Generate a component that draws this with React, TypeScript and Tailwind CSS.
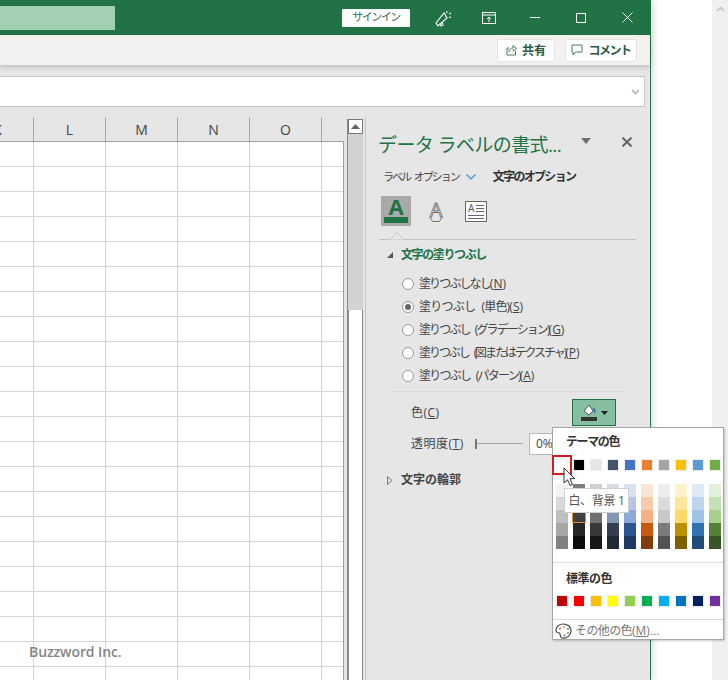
import React from "react";

const theme = [
  { top: "#ffffff", shades: ["#f2f2f2", "#d9d9d9", "#bfbfbf", "#a6a6a6", "#808080"] },
  { top: "#000000", shades: ["#7f7f7f", "#595959", "#404040", "#262626", "#0d0d0d"] },
  { top: "#e7e6e6", shades: ["#d0cece", "#afabab", "#757070", "#3a3838", "#171616"] },
  { top: "#44546a", shades: ["#d6dce4", "#acb9ca", "#8497b0", "#333f4f", "#222b35"] },
  { top: "#4472c4", shades: ["#d9e2f3", "#b4c6e7", "#8eaadb", "#2f5496", "#1f3864"] },
  { top: "#ed7d31", shades: ["#fbe5d5", "#f7cbac", "#f4b183", "#c55a11", "#833c0b"] },
  { top: "#a5a5a5", shades: ["#ededed", "#dbdbdb", "#c9c9c9", "#7b7b7b", "#525252"] },
  { top: "#ffc000", shades: ["#fff2cc", "#fee599", "#ffd965", "#bf9000", "#7f6000"] },
  { top: "#5b9bd5", shades: ["#deeaf6", "#bdd6ee", "#9cc2e5", "#2e74b5", "#1f4e79"] },
  { top: "#70ad47", shades: ["#e2efd9", "#c5e0b3", "#a8d08d", "#538135", "#375623"] },
];

const standard = ["#c00000", "#ff0000", "#ffc000", "#ffff00", "#92d050", "#00b050", "#00b0f0", "#0070c0", "#002060", "#7030a0"];

const fills = [
  { label: "塗りつぶしなし", key: "N", track: "tracking-[-1.9px]" },
  { label: "塗りつぶし (単色)", key: "S", track: "tracking-[-0.8px] [word-spacing:4px]", checked: true },
  { label: "塗りつぶし (グラデーション)", key: "G", track: "tracking-[-1.9px] [word-spacing:4px]" },
  { label: "塗りつぶし (図またはテクスチャ)", key: "P", track: "tracking-[-2.1px] [word-spacing:4px]" },
  { label: "塗りつぶし (パターン)", key: "A", track: "tracking-[-1.75px] [word-spacing:4px]" },
];

function TitleBar() {
  return (
    <div className="flex h-[35px] shrink-0 items-center bg-[#217346] text-white">
      <div className="h-[24px] w-[115px] bg-[#a3d0b3]" />
      <div className="ml-[227px] flex h-[18px] w-[68px] items-center justify-center rounded-[1px] bg-white text-[11px] tracking-[-1.5px] text-[#3b6a52]">
        サインイン
      </div>
      <svg className="ml-[24px]" width="18" height="20" viewBox="0 0 18 20" fill="none" stroke="white" strokeWidth="1.1">
        <path d="M2 15 L10 5 L13 10 L4 18 Z" />
        <path d="M6 15 L7 18 L9 17 L8 14" />
        <path d="M13 3 L12.5 5 M15 6 L17 5 M15 9 L17 9.5" />
      </svg>
      <svg className="ml-[30px]" width="14" height="12" viewBox="0 0 14 12" fill="none" stroke="white" strokeWidth="1">
        <rect x="0.5" y="0.5" width="13" height="11" />
        <path d="M0.5 3 H13.5" />
        <path d="M7 10 V5 M5 7 L7 5 L9 7" />
      </svg>
      <div className="ml-[34px] h-px w-[10px] bg-white" />
      <div className="ml-[36px] h-[10px] w-[10px] border border-white" />
      <svg className="ml-[36px]" width="11" height="11" viewBox="0 0 11 11" stroke="white" strokeWidth="1">
        <path d="M0.5 0.5 L10.5 10.5 M10.5 0.5 L0.5 10.5" />
      </svg>
    </div>
  );
}

function RibbonBar() {
  return (
    <div className="z-10 flex h-[30px] shrink-0 items-center justify-end gap-[10px] bg-[#f3f2f1] pr-[13px] shadow-[0_2px_5px_rgba(0,0,0,0.18)]">
      <div className="flex h-[23px] w-[58px] items-center justify-center gap-[5px] rounded-[2px] border border-[#e6e4e2] bg-white text-[12px] font-bold text-[#2a5c43]">
        <svg width="11" height="12" viewBox="0 0 11 12" fill="none" stroke="#4a7a62" strokeWidth="1">
          <path d="M3 4 H1 V11 H9.5 V7" />
          <path d="M3 8 C3 5 5 4 7 4 V1.5 L10.5 4.5 L7 7 V5.5" />
        </svg>
        <span className="pt-[2px]">共有</span>
      </div>
      <div className="flex h-[23px] w-[72px] items-center justify-center gap-[5px] rounded-[2px] border border-[#e6e4e2] bg-white text-[12px] font-bold tracking-[-1.5px] text-[#2a5c43]">
        <svg width="12" height="12" viewBox="0 0 12 12" fill="none" stroke="#4a7a62" strokeWidth="1">
          <path d="M1 1 H11 V8 H4.5 L2 11 V8 H1 Z" />
        </svg>
        <span className="pt-[2px]">コメント</span>
      </div>
    </div>
  );
}

function FormulaBar() {
  return (
    <div className="shrink-0 pt-[11px] pr-[5px]">
      <div className="flex h-[31px] items-center justify-end border border-l-0 border-[#c6c6c6] bg-white pr-[4px]">
        <svg width="9" height="6" viewBox="0 0 9 6" fill="none" stroke="#b5b5b5" strokeWidth="1.6">
          <path d="M1 1 L4.5 4.5 L8 1" />
        </svg>
      </div>
    </div>
  );
}

function Sheet() {
  const columns = ["K", "L", "M", "N", "O"];
  const rows = Array.from({ length: 22 }, (_, i) => i);
  return (
    <div className="w-[344px] shrink-0 overflow-hidden">
      <div className="ml-[-38px] flex h-[24px] text-[14px] text-[#444]">
        {columns.map((c) => (
          <div key={c} className="flex w-[72px] shrink-0 items-center justify-center border-r border-[#a8a8a8]">
            {c}
          </div>
        ))}
      </div>
      <div className="h-full border-t border-r border-[#9f9f9f] bg-white">
        {rows.map((r) => (
          <div key={r} className="ml-[-38px] flex h-[25px] border-b border-[#d4d4d4]">
            {columns.map((c) => (
              <div key={c} className="w-[72px] shrink-0 border-r border-[#d4d4d4]" />
            ))}
          </div>
        ))}
      </div>
    </div>
  );
}

function ScrollBar() {
  return (
    <div className="ml-[3px] mt-[2px] flex w-[16px] shrink-0 flex-col border-l border-[#8a8a8a]">
      <div className="flex h-[15px] w-[15px] items-center justify-center border border-[#777] bg-white">
        <svg width="9" height="5" viewBox="0 0 9 5">
          <path d="M0 5 L4.5 0 L9 5 Z" fill="#666" />
        </svg>
      </div>
      <div className="h-[176px] bg-[#d2d2d2]" />
      <div className="flex-1 border-x border-[#8a8a8a] bg-white" />
    </div>
  );
}

function PanelIcons() {
  return (
    <div className="mt-[9px] flex items-center pl-[15px]">
      <div className="flex h-[30px] w-[30px] flex-col items-center justify-end bg-[#a9a9a9] pb-[3px]">
        <span className="text-[22px] font-bold leading-[20px] text-[#217346]">A</span>
        <div className="mt-[1px] h-[6px] w-[24px] bg-[#217346]" />
      </div>
      <svg className="ml-[16px]" width="18" height="30" viewBox="0 0 18 30">
        <path d="M3 21 L5.5 25.5 H12.5 L15 21" fill="none" stroke="#777" strokeWidth="1" />
        <text x="9" y="21" fontSize="20" textAnchor="middle" fill="#f7f7f7" stroke="#6e6e6e" strokeWidth="0.8">A</text>
      </svg>
      <div className="ml-[20px] flex h-[21px] w-[22px] flex-col border border-[#666] bg-white px-[2px] pt-[1px]">
        <div className="flex items-start justify-between">
          <span className="text-[10px] leading-[11px] text-[#555]">A</span>
          <div className="mt-[2px] flex flex-col gap-[2px]">
            <div className="h-px w-[8px] bg-[#666]" />
            <div className="h-px w-[8px] bg-[#666]" />
            <div className="h-px w-[8px] bg-[#666]" />
          </div>
        </div>
        <div className="mt-[1px] h-px bg-[#666]" />
        <div className="mt-[2px] h-px bg-[#666]" />
      </div>
    </div>
  );
}

function Panel() {
  return (
    <div className="mt-[10px] min-w-0 flex-1 border-l border-[#c4c4c4] pt-[14px] text-[#444]">
      <div className="flex h-[28px] items-center pl-[12px]">
        <span className="w-[203px] whitespace-nowrap text-[19px] tracking-[-0.6px] text-[#217346]">データ ラベルの書式...</span>
        <svg className="mb-[8px]" width="10" height="6" viewBox="0 0 10 6">
          <path d="M0 0 H10 L5 6 Z" fill="#6e6e6e" />
        </svg>
        <svg className="ml-[31px] mb-[7px]" width="10" height="10" viewBox="0 0 10 10" stroke="#666" strokeWidth="2">
          <path d="M0.5 0.5 L9.5 9.5 M9.5 0.5 L0.5 9.5" />
        </svg>
      </div>
      <div className="mt-[8px] flex h-[20px] items-center pl-[17px] text-[12px]">
        <span className="whitespace-nowrap text-[11px] tracking-[-2px] text-[#444] [word-spacing:3px]">ラベル オプション</span>
        <svg className="ml-[7px]" width="10" height="6" viewBox="0 0 10 6" fill="none" stroke="#3f8fd2" strokeWidth="1.2">
          <path d="M0.5 0.5 L5 5 L9.5 0.5" />
        </svg>
        <span className="ml-[17px] whitespace-nowrap font-bold tracking-[-1.7px] text-[#333]">文字のオプション</span>
      </div>
      <PanelIcons />
      <div className="relative mt-[13px] ml-[13px] mr-[14px] h-px bg-[#c4c4c4]">
        <svg className="absolute left-[11px] top-[-7px]" width="14" height="8" viewBox="0 0 14 8">
          <path d="M0 7.5 L7 0.5 L14 7.5" fill="#e6e6e6" stroke="#c4c4c4" />
        </svg>
      </div>
      <div className="mt-[6px] flex h-[18px] items-center pl-[21px] text-[12px] font-bold tracking-[-1.4px] text-[#217346]">
        <svg width="6" height="6" viewBox="0 0 6 6">
          <path d="M6 0 V6 H0 Z" fill="#555" />
        </svg>
        <span className="ml-[8px]">文字の塗りつぶし</span>
      </div>
      <div className="mt-[8px] flex flex-col pl-[36px] text-[12px]">
        {fills.map((f) => (
          <div key={f.key} className="flex h-[23px] items-center">
            <span className="flex h-[12px] w-[12px] items-center justify-center rounded-full border border-[#9a9a9a] bg-white">
              {f.checked && <span className="h-[6px] w-[6px] rounded-full bg-[#666]" />}
            </span>
            <span className="ml-[5px] whitespace-nowrap">
              <span className={f.track}>{f.label}</span>(<u>{f.key}</u>)
            </span>
          </div>
        ))}
      </div>
      <div className="ml-[25px] mr-[24px] mt-[4px] h-px bg-[#dcdcdc]" />
      <div className="mt-[7px] flex h-[27px] items-center pl-[45px] text-[12px]">
        <span className="w-[161px] tracking-[0.5px]">
          色(<u>C</u>)
        </span>
        <div className="flex h-[27px] w-[44px] items-center justify-center gap-[4px] border border-[#217346] bg-[#86bfa0]">
          <svg width="16" height="19" viewBox="0 0 16 19">
            <path d="M3 8 L8 2 L12 8 L8 12 Z" fill="#fff" stroke="#333" strokeWidth="0.8" />
            <path d="M12 5 C14 6 14 8 13.5 10" fill="none" stroke="#1f6fb5" strokeWidth="1.4" />
            <rect x="0" y="14" width="16" height="4" fill="#333" />
          </svg>
          <svg width="7" height="4" viewBox="0 0 7 4">
            <path d="M0 0 H7 L3.5 4 Z" fill="#222" />
          </svg>
        </div>
      </div>
      <div className="mt-[6px] flex h-[23px] items-center pl-[45px] text-[12px]">
        <span className="w-[64px] whitespace-nowrap tracking-[0.5px]">
          透明度(<u>T</u>)
        </span>
        <div className="flex h-[10px] w-[48px] items-center">
          <div className="h-[10px] w-[2px] bg-[#777]" />
          <div className="h-px flex-1 bg-[#a5a5a5]" />
        </div>
        <div className="ml-[6px] flex h-[22px] w-[40px] items-center border border-[#b8b8b8] bg-white pl-[6px]">0%</div>
      </div>
      <div className="mt-[16px] flex h-[18px] items-center pl-[21px] text-[12px] font-bold">
        <svg width="6" height="9" viewBox="0 0 6 9" fill="none" stroke="#777">
          <path d="M0.5 0.5 L5 4.5 L0.5 8.5 Z" />
        </svg>
        <span className="ml-[8px]">文字の輪郭</span>
      </div>
    </div>
  );
}

function ColorMenu() {
  return (
    <div className="absolute left-[552px] top-[427px] h-[213px] w-[172px] border border-[#a6a6a6] bg-white shadow-[1px_1px_2px_rgba(0,0,0,0.2)]">
      <div className="flex h-[28px] items-center pl-[13px] text-[12px] font-bold tracking-[-1.4px] text-[#333]">テーマの色</div>
      <div className="mt-[3px] flex gap-[5px] pl-[3px]">
        {theme.map((c) => (
          <div key={c.top} className="h-[12px] w-[12px] border border-[#eeeeee]" style={{ background: c.top }} />
        ))}
      </div>
      <div className="mt-[13px] flex gap-[5px] pl-[3px]">
        {theme.map((c) => (
          <div key={c.top} className="flex w-[12px] flex-col">
            {c.shades.map((s) => (
              <div key={s} className="h-[13px] w-[12px]" style={{ background: s }} />
            ))}
          </div>
        ))}
      </div>
      <div className="mt-[13px] h-px bg-[#dddddd]" />
      <div className="flex h-[32px] items-center pl-[13px] text-[12px] font-bold tracking-[-0.5px] text-[#333]">標準の色</div>
      <div className="flex gap-[5px] pl-[3px]">
        {standard.map((c) => (
          <div key={c} className="h-[12px] w-[12px] border border-[#eeeeee]" style={{ background: c }} />
        ))}
      </div>
      <div className="mt-[12px] h-px bg-[#dddddd]" />
      <div className="flex h-[21px] items-center pl-[2px] text-[12px] text-[#777]">
        <svg width="17" height="16" viewBox="0 0 17 16">
          <path d="M8 1 C3 1 0.7 5 1 8 C1.3 10 3.5 9.5 4.5 10 C6 11 4 14 7 15 C12 16 16 12 16 8 C16 4 13 1 8 1 Z" fill="#fff" stroke="#444" strokeWidth="1.2" />
          <circle cx="5" cy="5.5" r="1" fill="#d9534f" />
          <circle cx="9" cy="3.8" r="1" fill="#e0a030" />
          <circle cx="13" cy="6" r="1" fill="#4a90d9" />
          <circle cx="13" cy="10" r="1" fill="#6aa84f" />
          <circle cx="9.5" cy="12.5" r="1" fill="#8e6bbf" />
        </svg>
        <span className="ml-[3px] whitespace-nowrap">
          <span className="tracking-[-0.6px]">その他の色</span>(<u>M</u>)...
        </span>
      </div>
      <div className="absolute left-[-1px] top-[27px] h-[20px] w-[20px] border-[2px] border-[#d01c1c]" />
      <div className="absolute left-[19px] top-[83px] h-[12px] w-[14px] border border-[#e08a3c]" />
    </div>
  );
}

export default function App() {
  return (
    <div className="relative flex h-[680px] w-[728px] overflow-hidden bg-white font-['Open_Sans','Noto_Sans_CJK_JP',sans-serif]">
      <div className="z-10 flex h-full w-[651px] shrink-0 flex-col border-r border-[#217346] bg-[#e6e6e6] shadow-[3px_0_6px_rgba(0,0,0,0.12)]">
        <TitleBar />
        <RibbonBar />
        <FormulaBar />
        <div className="flex min-h-0 flex-1 overflow-hidden">
          <div className="mt-[10px] flex">
            <Sheet />
            <ScrollBar />
          </div>
          <div className="ml-[2px] flex min-w-0 flex-1">
            <Panel />
          </div>
        </div>
      </div>
      <div className="flex-1" />
      <div className="flex w-[16px] shrink-0 justify-center bg-[#f0f0f0] pt-[6px]">
        <svg width="9" height="6" viewBox="0 0 9 6" fill="none" stroke="#c8c8c8" strokeWidth="1.8">
          <path d="M1 5 L4.5 1.5 L8 5" />
        </svg>
      </div>

      <div className="absolute left-[29px] top-[641px] z-20 text-[14px] font-semibold tracking-[-0.1px] text-[#858585]">Buzzword Inc.</div>
      <div className="absolute inset-0 z-30">
        <ColorMenu />
        <div className="absolute left-[564px] top-[488px] flex h-[25px] w-[65px] items-center justify-center border border-[#cfcfcf] bg-white text-[12px] tracking-[-0.3px] text-[#555]">
          白、背景 1
        </div>
        <svg className="absolute left-[563px] top-[467px]" width="14" height="20" viewBox="0 0 14 20">
          <path d="M1 1 V16 L4.5 12.8 L7 18.5 L9.5 17.5 L7 11.8 L11.5 11.5 Z" fill="#fff" stroke="#333" strokeWidth="1" />
        </svg>
      </div>
    </div>
  );
}
